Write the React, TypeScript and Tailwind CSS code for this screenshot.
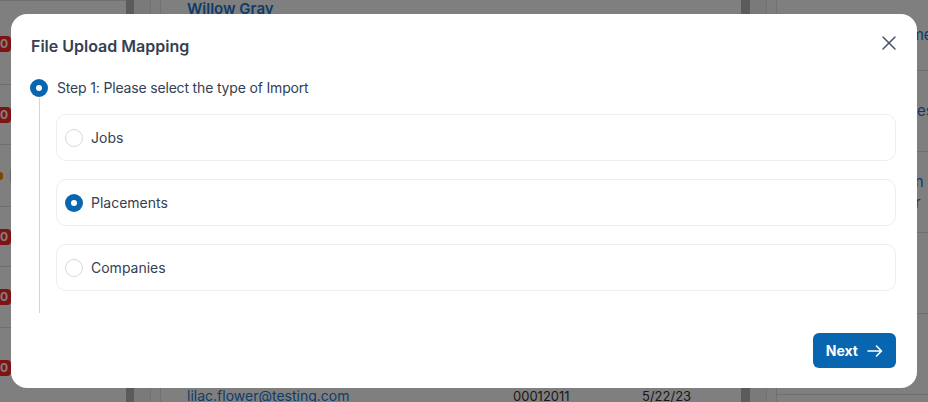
import { useState } from "react";
import { X } from "lucide-react";

const OPTIONS = ["Jobs", "Placements", "Companies"];

// Filas de la página que queda detrás del modal (solo se ven los bordes).
const LEFT_ROWS = [
  { h: "h-[82px]", badge: "red" },
  { h: "h-[60px]", badge: "red" },
  { h: "h-[62px]", badge: "orange" },
  { h: "h-[60px]", badge: "red" },
  { h: "h-[61px]", badge: "red" },
  { h: "h-[80px]", badge: "red" },
];

const RIGHT_ROWS = [
  { text: ["Name"], pl: "pl-[114px]" },
  { text: ["Roles"], pl: "pl-[118px]" },
  { text: ["Plan", "Tier"], pl: "pl-[116px]" },
  { text: [""], pl: "pl-[120px]" },
  { text: [""], pl: "pl-[120px]" },
];

function Radio({ checked }: { checked: boolean }) {
  return checked ? (
    <span className="flex h-[18px] w-[18px] shrink-0 items-center justify-center rounded-full bg-[#0866b0]">
      <span className="h-[6px] w-[6px] rounded-full bg-white" />
    </span>
  ) : (
    <span className="h-[18px] w-[18px] shrink-0 rounded-full border-[1.5px] border-[#d5d9e0] bg-white" />
  );
}

function BackgroundPage() {
  return (
    <div className="flex h-full">
      {/* panel izquierdo */}
      <div className="flex w-[126px] shrink-0 flex-col border-t border-[#dedede] pt-[2px]">
        {LEFT_ROWS.map((r, i) => (
          <div key={i} className={`${r.h} flex shrink-0 items-center border-b border-[#dedede]`}>
            {r.badge === "red" ? (
              <span className="-ml-3 flex h-4 w-[23px] items-center justify-end rounded-[4px] bg-[#ff2424] pr-[3px] text-[12px] font-bold leading-none text-white">
                0
              </span>
            ) : (
              <div className="flex items-center gap-[7px]">
                <span className="h-2 w-[3px] rounded-r-full bg-[#ff8a00]" />
                <span className="h-[14px] w-[4px] rounded-sm bg-[#cfcfcf]" />
              </div>
            )}
          </div>
        ))}
      </div>
      <div className="w-2 shrink-0 bg-[#b6b6b6]" />
      <div className="w-[17px] shrink-0 border-r border-[#e2e2e2] bg-[#f4f4f4]" />
      <div className="w-[10px] shrink-0 border-r border-[#e2e2e2] bg-[#fafafa]" />

      {/* tabla central */}
      <div className="flex flex-1 flex-col justify-between pl-[26px] pr-5">
        <div className="flex h-[20px] items-start justify-between text-[15px] leading-[18px]">
          <span className="font-semibold text-[#1b78d4]">Willow Gray</span>
          <span className="mt-[11px] pr-[40px] text-[13px] text-[#333]">Active</span>
        </div>
        <div className="flex h-[15px] items-start text-[14px] leading-[18px]">
          <span className="w-[326px] text-[#1b78d4]">lilac.flower@testing.com</span>
          <span className="w-[129px] text-[13px] text-[#333]">00012011</span>
          <span className="text-[13px] text-[#333]">5/22/23</span>
        </div>
      </div>
      <div className="w-[9px] shrink-0 bg-[#b6b6b6]" />
      <div className="w-[17px] shrink-0 border-r border-[#e2e2e2] bg-[#f4f4f4]" />
      <div className="w-[10px] shrink-0 border-r border-[#e2e2e2] bg-[#fafafa]" />

      {/* panel derecho */}
      <div className="flex w-[151px] shrink-0 flex-col">
        {RIGHT_ROWS.map((r, i) => (
          <div
            key={i}
            className={`flex shrink-0 flex-col justify-center gap-[3px] whitespace-nowrap border-b border-[#dedede] text-[15px] leading-[18px] text-[#1b78d4] ${r.pl} ${i === 0 ? "h-[71px]" : "h-[81px]"}`}
          >
            {r.text.map((t, j) => (
              <span key={j}>{t}</span>
            ))}
          </div>
        ))}
      </div>
    </div>
  );
}

export default function App() {
  const [selected, setSelected] = useState("Placements");

  return (
    <div className="relative h-[402px] w-[928px] overflow-hidden bg-white font-['Inter',_sans-serif]">
      <BackgroundPage />
      <div className="absolute inset-0 bg-black/50" />

      <div className="absolute inset-0 flex items-center justify-center">
        <div className="w-[906px] rounded-2xl bg-white">
          {/* cabecera */}
          <div className="flex items-center justify-between pl-5 pr-4 pt-5">
            <h2 className="text-base font-semibold leading-6 text-[#344054]">File Upload Mapping</h2>
            <button className="-mt-[6px] text-[#475467]">
              <X size={24} strokeWidth={1.5} />
            </button>
          </div>

          {/* paso 1 */}
          <div className="pl-[19px] pr-[21px]">
            <div className="mt-[20px] flex h-5 items-center gap-[9px]">
              <Radio checked />
              <span className="text-sm leading-5 tracking-[-0.17px] text-[#344054]">
                Step 1: Please select the type of Import
              </span>
            </div>
            <div className="flex">
              <div className="flex w-[18px] shrink-0 justify-center">
                <div className="w-px bg-[#d0d5dd]" />
              </div>
              <div className="flex flex-1 flex-col gap-[18px] pb-[22px] pl-[8px] pt-4">
                {OPTIONS.map((o) => (
                  <label
                    key={o}
                    onClick={() => setSelected(o)}
                    className="flex h-[47px] cursor-pointer items-center gap-2 rounded-[10px] border border-[#eceef2] pl-2"
                  >
                    <Radio checked={selected === o} />
                    <span className="text-sm leading-5 text-[#344054]">{o}</span>
                  </label>
                ))}
              </div>
            </div>
          </div>

          {/* pie */}
          <div className="flex justify-end pb-5 pr-[21px] pt-5">
            <button className="flex h-[35px] items-center gap-[9px] rounded-md bg-[#0866b0] px-[13px] text-sm font-bold text-white">
              Next
              <svg width="16" height="12" viewBox="0 0 16 12" fill="none" stroke="currentColor" strokeWidth="1.6" strokeLinecap="round" strokeLinejoin="round">
                <path d="M1 6h13.5M9.5 1l5 5-5 5" />
              </svg>
            </button>
          </div>
        </div>
      </div>
    </div>
  );
}
